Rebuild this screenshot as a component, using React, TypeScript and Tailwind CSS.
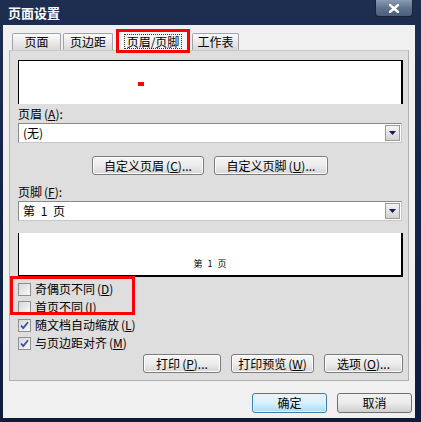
import React from "react";

const font = "font-[family-name:Noto_Sans_CJK_SC,Liberation_Sans,sans-serif]";

function Acc({ k }: { k: string }) {
  return (
    <span className="ml-[2px]">
      (<span className="underline">{k}</span>)
    </span>
  );
}

function Tab({ label, w }: { label: string; w: string }) {
  return (
    <div
      className={`${w} h-[17px] flex items-center justify-center border border-b-0 border-[#a0a4a8] rounded-t-[2px] bg-gradient-to-b from-[#fbfbfb] to-[#d9d9d9] text-[12px] leading-[14px]`}
    >
      {label}
    </div>
  );
}

function Button({ children, w }: { children: React.ReactNode; w: string }) {
  return (
    <div
      className={`${w} h-[19px] flex items-center justify-center rounded-[3px] border border-[#7b7b7b] bg-gradient-to-b from-[#f6f6f6] via-[#ececec] to-[#d6d6d6] text-[12px] leading-[14px] shadow-[inset_0_0_0_1px_#fcfcfc]`}
    >
      {children}
    </div>
  );
}

function Select({ value }: { value: string }) {
  return (
    <div className="h-[20px] w-[384px] flex items-center bg-white border border-[#8a8a8a] border-b-[#c8c8c8] border-r-[#c8c8c8]">
      <span className="flex-1 pl-[4px] text-[12px] leading-[14px] whitespace-pre [word-spacing:3px]">{value}</span>
      <div className="w-[15px] h-[16px] mr-px flex items-center justify-center border border-[#9a9a9a] bg-gradient-to-b from-[#f4f4f4] to-[#d2d2d2]">
        <svg width="7" height="4" viewBox="0 0 7 4">
          <path d="M0 0h7L3.5 4z" fill="#101c5a" />
        </svg>
      </div>
    </div>
  );
}

function Check({ label, checked }: { label: React.ReactNode; checked?: boolean }) {
  return (
    <div className="h-[18px] flex items-center gap-[4px]">
      <div className="w-[13px] h-[13px] border border-[#8e8f8f] bg-gradient-to-br from-[#d6d6d6] to-[#fafafa] flex items-center justify-center">
        {checked && (
          <svg width="9" height="9" viewBox="0 0 9 9">
            <path d="M1 4.5l2.2 2.6L8 1.2" stroke="#3a4fa8" strokeWidth="1.8" fill="none" />
          </svg>
        )}
      </div>
      <span className="text-[12px] leading-[14px]">{label}</span>
    </div>
  );
}

export default function App() {
  return (
    <div className={`w-[421px] h-[422px] flex flex-col bg-gradient-to-b from-[#1d2e50] via-[#13244a] to-[#0e1c3c] text-black ${font}`}>
      {/* title bar */}
      <div className="h-[25px] flex items-start justify-between">
        <span className="ml-[8px] mt-[5px] text-[13px] leading-[15px] font-bold text-white">页面设置</span>
        <div className="mr-[8px] w-[38px] h-[17px] flex items-center justify-center rounded-b-[4px] border border-t-0 border-[#1a2236] bg-gradient-to-b from-[#8b9bb2] via-[#5f7390] to-[#4a5e7c]">
          <svg width="10" height="9" viewBox="0 0 10 9">
            <path d="M1 1l8 7M9 1L1 8" stroke="white" strokeWidth="2.4" strokeLinecap="square" />
          </svg>
        </div>
      </div>

      {/* client */}
      <div className="ml-[3px] w-[412px] h-[393px] bg-[#f0f0f0] flex flex-col">
        {/* tabs */}
        <div className="mt-[4px] ml-[9px] h-[21px] flex items-end">
          <Tab label="页面" w="w-[49px]" />
          <div className="w-[2px]" />
          <Tab label="页边距" w="w-[50px]" />
          <div className="w-[3px]" />
          <div className="relative z-10 w-[74px] h-[24px] -mb-[3px] border-[3px] border-[#ff0000] bg-[#f4f4f4] flex items-start justify-center pt-[2px]">
            <div className="px-[2px] h-[15px] border border-dotted border-[#333] text-[12px] leading-[13px] flex items-center">
              页眉/页脚
            </div>
          </div>
          <div className="w-[2px]" />
          <Tab label="工作表" w="w-[47px]" />
        </div>

        {/* panel */}
        <div className="ml-[6px] w-[400px] h-[331px] border border-[#b0b0b0] border-t-[#c8c8c8] bg-[#dedede] flex flex-col pl-[8px]">
          {/* header preview */}
          <div className="mt-[9px] w-[385px] h-[44px] bg-white border-t border-l border-black border-r-2 pt-[21px] pl-[119px]">
            <div className="w-[6px] h-[4px] bg-[#ff0000]" />
          </div>

          <div className="h-[18px] flex items-center mt-[1px] text-[12px] leading-[14px]">
            页眉<Acc k="A" />:
          </div>
          <Select value="(无)" />

          <div className="mt-[13px] w-[384px] flex justify-center gap-[10px]">
            <Button w="w-[112px]">
              自定义页眉<Acc k="C" />...
            </Button>
            <Button w="w-[114px]">
              自定义页脚<Acc k="U" />...
            </Button>
          </div>

          <div className="h-[18px] flex items-center mt-[8px] text-[12px] leading-[14px]">
            页脚<Acc k="F" />:
          </div>
          <Select value="第 1 页" />

          {/* footer preview */}
          <div className="mt-[12px] w-[385px] h-[44px] bg-white border-l border-black border-r-2 border-b-2 flex justify-center pt-[26px]">
            <span className="text-[9px] leading-[10px] whitespace-pre [word-spacing:3px]">第 1 页</span>
          </div>

          <div className="mt-[3px] relative">
            <div className="absolute left-[-8px] top-[-4px] w-[125px] h-[39px] border-[3px] border-[#ff0000]" />
            <Check label={<>奇偶页不同<Acc k="D" /></>} />
            <Check label={<>首页不同<Acc k="I" /></>} />
          </div>
          <Check checked label={<>随文档自动缩放<Acc k="L" /></>} />
          <Check checked label={<>与页边距对齐<Acc k="M" /></>} />

          <div className="mt-[2px] w-[385px] flex justify-end gap-[10px]">
            <Button w="w-[78px]">
              打印<Acc k="P" />...
            </Button>
            <Button w="w-[83px]">
              打印预览<Acc k="W" />
            </Button>
            <Button w="w-[79px]">
              选项<Acc k="O" />...
            </Button>
          </div>
        </div>

        {/* ok / cancel */}
        <div className="mt-[12px] mr-[3px] flex justify-end gap-[10px]">
          <div className="w-[75px] h-[20px] flex items-center justify-center rounded-[3px] border border-[#3c7fb1] bg-gradient-to-b from-[#eaf6fd] via-[#d9f0fc] to-[#a7d9f5] text-[12px] leading-[14px] shadow-[inset_0_0_0_1px_#dff2fd]">
            确定
          </div>
          <div className="w-[75px] h-[20px] flex items-center justify-center rounded-[3px] border border-[#707070] bg-gradient-to-b from-[#f2f2f2] via-[#ebebeb] to-[#cfcfcf] text-[12px] leading-[14px]">
            取消
          </div>
        </div>
      </div>
    </div>
  );
}
